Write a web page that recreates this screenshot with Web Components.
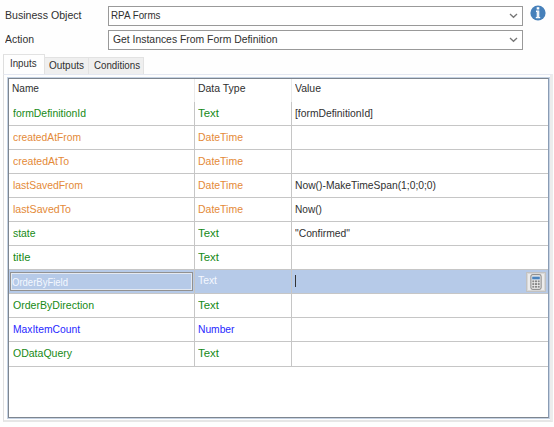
<!DOCTYPE html>
<html lang="en"><head><meta charset="utf-8"><title>Business Object</title>
<style>
html,body{margin:0;background:#fefefe}
body{width:554px;height:427px;overflow:hidden;font:11px/14px "Liberation Sans",Arial,sans-serif;color:#303030}
</style></head><body>
<action-dialog></action-dialog>
<script>
const attach=(el,html)=>{el.attachShadow({mode:'open'}).innerHTML=html};

// A one-line label condensed or widened to a given width.
class FitLabel extends HTMLElement{
  connectedCallback(){
    attach(this,'<style>:host{display:block;height:14px;line-height:14px;white-space:pre}span{display:inline-block;transform-origin:0 50%}</style><span><slot></slot></span>');
    const s=this.shadowRoot.querySelector('span'),w=+this.getAttribute('w');
    if(w) s.style.transform='scaleX('+(w/s.getBoundingClientRect().width).toFixed(4)+')';
  }
}
customElements.define('fit-label',FitLabel);

class ComboBox extends HTMLElement{
  connectedCallback(){
    attach(this,`<style>:host{display:flex;box-sizing:border-box;height:20px;border:1px solid #999;background:#fff;align-items:flex-start;justify-content:space-between;padding:1px 4px 0 var(--inset,3px)}
    svg{display:block;margin-top:5px}</style><slot></slot><svg width="9" height="6" viewBox="0 0 9 6"><path d="M1 1l3.5 3.3L8 1" fill="none" stroke="#777" stroke-width="1.3"/></svg>`);
  }
}
customElements.define('combo-box',ComboBox);

class InfoIcon extends HTMLElement{
  connectedCallback(){
    attach(this,`<style>:host{display:block;width:16px;height:16px}svg{display:block}</style>
    <svg width="16" height="16" viewBox="0 0 16 16"><circle cx="8" cy="8" r="7.6" fill="#4680ba"/><rect x="6.7" y="2.2" width="2.6" height="2.3" fill="#fff"/><path d="M6 5.6h3.3v6.3h.9v1.3H5.8v-1.3h.9v-5H6z" fill="#fff"/><path d="M8 6v6.5" stroke="#b9cfe4" stroke-width=".6"/></svg>`);
  }
}
customElements.define('info-icon',InfoIcon);

class TabButton extends HTMLElement{
  connectedCallback(){
    attach(this,`<style>:host{display:block;box-sizing:border-box;height:17px;border:1px solid #e2e2e2;border-left:0;border-bottom:0;background:#efefef;padding:0 0 0 4px}
    :host([active]){height:20px;background:#fefefe;border-left:1px solid #dedede;padding:1px 0 0 6px}</style><slot></slot>`);
  }
}
customElements.define('tab-button',TabButton);

class CalcButton extends HTMLElement{
  connectedCallback(){
    let keys='';
    for(let r=0;r<3;r++)for(let c=0;c<3;c++)keys+=`<rect x="${2.3+c*2.7}" y="${6.4+r*2.7}" width="2" height="1.9" fill="#888"/>`;
    attach(this,`<style>:host{display:flex;flex:none;box-sizing:border-box;width:20px;height:20px;border:1px solid #c2c2c2;box-shadow:inset 0 0 0 1px #d8d8d8;background:#ececec;align-items:center;justify-content:center}svg{display:block}</style>
    <svg width="12" height="16" viewBox="0 0 12 16"><rect x=".9" y=".6" width="10.2" height="14.8" rx="1.8" fill="#f4f4f4" stroke="#929292" stroke-width="1.2"/><rect x="2.2" y="2.6" width="7.6" height="2.8" fill="#4a83bd"/>${keys}</svg>`);
  }
}
customElements.define('calc-button',CalcButton);

class ParamRow extends HTMLElement{
  connectedCallback(){
    attach(this,`<style>:host{display:grid;grid-template-columns:185px 97px 1fr;box-sizing:border-box;height:24.05px;border-bottom:1px solid #c6c6c6}
    ::slotted(*){box-sizing:border-box;padding:4px 0 0 3px;border-left:1px solid #c6c6c6;height:100%}
    ::slotted(:first-child){border-left:0;padding-left:4px}
    :host([header]){height:23px;border-bottom:0}
    :host([header]) ::slotted(*){padding:2px 0 0 3px;border-color:#eaeaea}
    :host([selected]){background:#b6cae8}
    :host([selected]) ::slotted(*){padding:3px 0 0 3px}</style><slot></slot>`);
  }
}
customElements.define('param-row',ParamRow);

class ParamTable extends HTMLElement{
  connectedCallback(){
    const G='#168a16',O='#e48a38',B='#2828ff';
    const rows=[
     ['formDefinitionId',73,'Text',21,'[formDefinitionId]',78,G],
     ['createdAtFrom',68,'DateTime',45,'',0,O],
     ['createdAtTo',56,'DateTime',45,'',0,O],
     ['lastSavedFrom',70,'DateTime',45,'Now()-MakeTimeSpan(1;0;0;0)',141,O],
     ['lastSavedTo',58,'DateTime',45,'Now()',27,O],
     ['state',22.5,'Text',21,'"Confirmed"',55,G],
     ['title',17.5,'Text',21,'',0,G],
     ['OrderByField',56,'Text',19,'',0,'#f4f8ff',1],
     ['OrderByDirection',81,'Text',21,'',0,G],
     ['MaxItemCount',67,'Number',36.5,'',0,B],
     ['ODataQuery',59,'Text',21,'',0,G]];
    const lab=(t,w)=>t?`<fit-label w="${w}">${t}</fit-label>`:'';
    const body=rows.map(([n,nw,t,tw,v,vw,c,s])=>s
      ?`<param-row selected style="color:${c}"><div class="edit"><div class="box">${lab(n,nw)}</div></div><div>${lab(t,tw)}</div><div class="value"><i></i><calc-button></calc-button></div></param-row>`
      :`<param-row style="color:${c}"><div>${lab(n,nw)}</div><div>${lab(t,tw)}</div><div style="color:#303030">${lab(v,vw)}</div></param-row>`).join('');
    attach(this,`<style>:host{display:block;box-sizing:border-box;height:340px;border:1px solid #7d858f;border-right-color:#8a9cb4;box-shadow:0 0 0 1px #c5d2e3;background:#fff}
    param-row .edit{padding:2px 1px 2px 1px}
    .box{box-sizing:border-box;height:19px;border:1px solid #919191;box-shadow:inset 0 0 0 1px #e4e9f1;padding:2px 0 0 1px}
    param-row .value{display:flex;justify-content:space-between;padding:2px 2px 0 3px}
    i{display:block;width:1px;height:12px;margin-top:3px;background:#333}</style>
    <param-row header><div>${lab('Name',27)}</div><div>${lab('Data Type',47.5)}</div><div>${lab('Value',26)}</div></param-row>${body}`);
  }
}
customElements.define('param-table',ParamTable);

class ActionDialog extends HTMLElement{
  connectedCallback(){
    attach(this,`<style>:host{display:block;box-sizing:border-box;height:427px;padding:6px 0 0}
    .form{display:grid;grid-template-columns:103px 415px 16px;row-gap:4px;padding-left:5px;align-items:start}
    .form>fit-label{margin-top:2px}
    info-icon{margin:-1px 0 0 7px}
    .tabs{display:flex;align-items:flex-end;height:20px;margin:4px 0 0 3px}
    .page{box-sizing:border-box;height:348px;margin:0 1px 0 3px;border:1px solid #dfdfdf;border-top-color:#e4e8f2;border-right:3px solid #ececec;border-bottom:2px solid #e6e6e6;padding:3px 1px 0 4px}</style>
    <div class="form"><fit-label w="76.5">Business Object</fit-label><combo-box style="--inset:2px"><fit-label w="49.5">RPA Forms</fit-label></combo-box><info-icon></info-icon>
    <fit-label w="29">Action</fit-label><combo-box style="--inset:4px"><fit-label w="164.5">Get Instances From Form Definition</fit-label></combo-box><span></span></div>
    <div class="tabs"><tab-button active style="width:42px"><fit-label w="26.5">Inputs</fit-label></tab-button><tab-button style="width:44px"><fit-label w="35">Outputs</fit-label></tab-button><tab-button style="width:55px;padding-left:5px"><fit-label w="46">Conditions</fit-label></tab-button></div>
    <div class="page"><param-table></param-table></div>`);
  }
}
customElements.define('action-dialog',ActionDialog);
</script></body></html>
